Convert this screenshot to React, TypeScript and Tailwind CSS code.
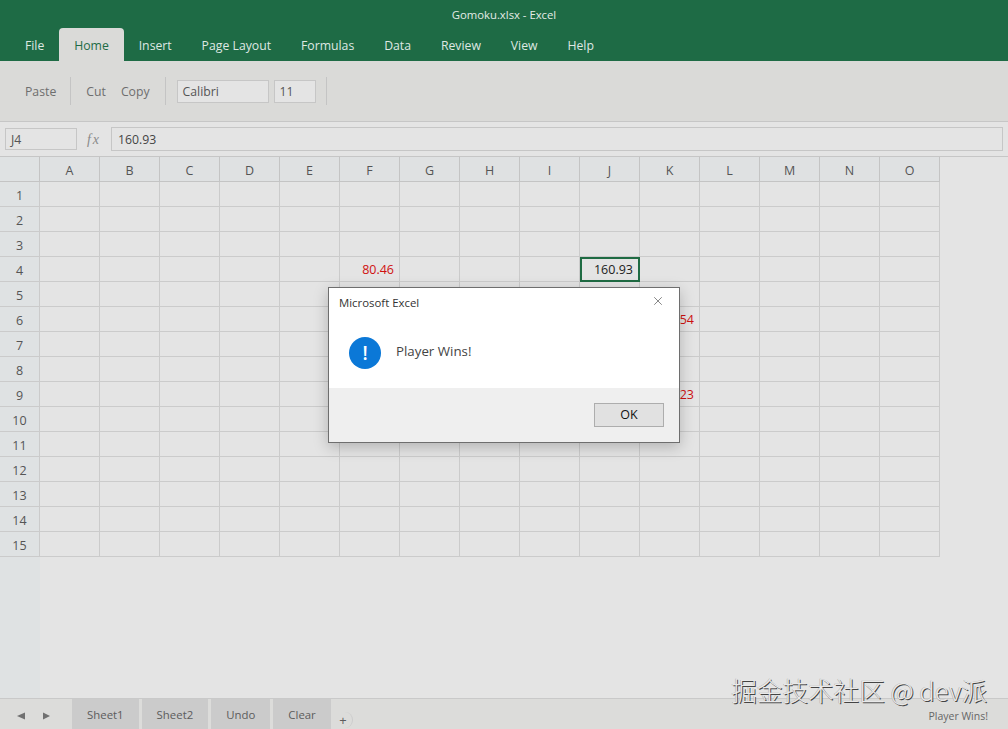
import { X } from "lucide-react";

const tabs = ["File", "Home", "Insert", "Page Layout", "Formulas", "Data", "Review", "View", "Help"];
const columns = ["A", "B", "C", "D", "E", "F", "G", "H", "I", "J", "K", "L", "M", "N", "O"];
const rows = Array.from({ length: 15 }, (_, i) => i + 1);
const sheets = ["Sheet1", "Sheet2", "Undo", "Clear"];

// cell values keyed by address, only these are filled on the board
const cells: Record<string, string> = {
  F4: "80.46",
  J4: "160.93",
  K6: "120.54",
  K9: "40.23",
};

function Cell({ address }: { address: string }) {
  const value = cells[address];
  const selected = address === "J4";
  return (
    <div
      className={`flex h-[25px] items-center justify-end pt-[2px] text-[12.5px] ${
        selected
          ? "border-2 border-[#1f6b43] pr-[5px] text-[#222222]"
          : "border-r border-b border-[#cbcbcb] pr-[5px] text-[#d01010]"
      }`}
    >
      {value}
    </div>
  );
}

export default function App() {
  return (
    <div className="relative flex h-[729px] w-[1008px] flex-col overflow-hidden bg-[#e4e4e4] font-['Open_Sans','Noto_Sans',sans-serif] text-[#444444]">
      {/* Title + ribbon tabs */}
      <div className="bg-[#1e6b45] text-[#dfe8e3]">
        <div className="flex h-[28px] items-center justify-center pt-[2px] text-[11.3px] text-[#e4ebe7]">Gomoku.xlsx - Excel</div>
        <div className="flex h-[33px] items-end pl-[10px] text-[12.25px]">
          {tabs.map((tab) => (
            <div
              key={tab}
              className={`flex h-[33px] items-center px-[14.95px] pt-[3px] ${
                tab === "Home" ? "rounded-t-[4px] bg-[#dadad8] text-[#1e6b45]" : ""
              }`}
            >
              {tab}
            </div>
          ))}
        </div>
      </div>

      {/* Ribbon */}
      <div className="flex h-[61px] items-center border-b border-[#c6c6c6] bg-[#dadad8] pl-[25px] text-[12.25px] text-[#6e6e6e]">
        <span className="pt-[3px]">Paste</span>
        <div className="mr-[15px] ml-[14px] h-[28px] w-px bg-[#c4c4c4]" />
        <span className="pt-[3px]">Cut</span>
        <span className="ml-[15px] pt-[3px]">Copy</span>
        <div className="mr-[11px] ml-[15px] h-[28px] w-px bg-[#c4c4c4]" />
        <div className="flex h-[23px] w-[92px] items-center border border-[#c6c6c6] bg-[#e4e4e4] pt-[3px] pl-[5px] text-[#555555]">Calibri</div>
        <div className="ml-[5px] flex h-[23px] w-[42px] items-center border border-[#c6c6c6] bg-[#e4e4e4] pt-[3px] pl-[5px] text-[#555555]">11</div>
        <div className="ml-[10px] h-[28px] w-px bg-[#c4c4c4]" />
      </div>

      {/* Formula bar */}
      <div className="flex h-[35px] items-center border-b border-[#c6c6c6] bg-[#e4e4e4] pl-[5px] text-[12.25px]">
        <div className="flex h-[22px] w-[72px] items-center border border-[#c6c6c6] pt-[2px] pl-[5px] text-[#555555]">J4</div>
        <span className="w-[34px] text-center font-['Liberation_Serif',serif] text-[14px] tracking-[2px] text-[#8a8a8a] italic">fx</span>
        <div className="flex h-[24px] w-[892px] items-center border border-[#c6c6c6] pt-[2px] pl-[6px] text-[#444444]">160.93</div>
      </div>

      {/* Sheet grid */}
      <div className="flex min-h-0 flex-1">
        <div className="w-[40px] bg-[#dfe2e3]">
          <div className="h-[25px] border-r border-b border-[#c4c4c4]" />
          {rows.map((row) => (
            <div key={row} className="flex h-[25px] items-center justify-center border-r border-b border-[#cbcbcb] pt-[4px] text-[12.5px] text-[#555555]">
              {row}
            </div>
          ))}
        </div>
        <div className="grid h-fit grid-cols-[repeat(15,60px)]">
          {columns.map((col) => (
            <div key={col} className="flex h-[25px] items-center justify-center border-r border-b border-[#c4c4c4] bg-[#dfe1e2] pt-[4px] text-[12.5px] text-[#555555]">
              {col}
            </div>
          ))}
          {rows.flatMap((row) => columns.map((col) => <Cell key={col + row} address={col + row} />))}
        </div>
      </div>

      {/* Sheet tabs + status */}
      <div className="flex h-[31px] items-end border-t border-[#c9c9c9] bg-[#dcdcda] text-[11.4px] text-[#5c5c5c]">
        <div className="flex h-[30px] w-[72px] items-center pl-[17px] text-[#707070]">
          <svg width="8" height="8" viewBox="0 0 8 8" className="mt-[3px]">
            <path d="M0 4 8 .5v7z" fill="currentColor" />
          </svg>
          <svg width="8" height="8" viewBox="0 0 8 8" className="mt-[3px] ml-[18px]">
            <path d="M7 4 0 .5v7z" fill="currentColor" />
          </svg>
        </div>
        <div className="flex gap-[3px]">
          {sheets.map((sheet) => (
            <div key={sheet} className="flex h-[30px] items-center bg-[#cbcbcb] px-[15px] pt-[2px]">
              {sheet}
            </div>
          ))}
        </div>
        <div className="mb-[1px] flex h-[16px] w-[22px] items-center justify-end rounded-r-full border-r border-[#cccccc] pr-[5px] text-[13px] leading-none">+</div>
        <div className="mb-[4px] ml-auto pr-[20px] text-[10.5px] text-[#666666]">Player Wins!</div>
      </div>

      {/* Message box */}
      <div className="absolute top-[287px] left-[328px] w-[352px] border border-[#6e6e6e] bg-white shadow-[0_4px_14px_rgba(0,0,0,0.22)]">
        <div className="flex h-[30px] items-center justify-between pr-[14px] pl-[10px] text-[11.4px] text-[#333333]">
          <span>Microsoft Excel</span>
          <X size={14} strokeWidth={1.2} className="-mt-[5px] text-[#555555]" />
        </div>
        <div className="flex h-[70px] items-center gap-[15px] pl-[20px] text-[13.3px] text-[#444444]">
          <div className="flex h-[32px] w-[32px] items-center justify-center rounded-full bg-[#0b78d7] text-[19px] leading-none font-semibold text-white">!</div>
          <span className="-mt-[3px]">Player Wins!</span>
        </div>
        <div className="flex h-[54px] items-center justify-end bg-[#efefef] pr-[15px]">
          <div className="flex h-[24px] w-[70px] items-center justify-center border border-[#adadad] bg-[#e1e1e1] text-[12.5px] text-[#111111]">OK</div>
        </div>
      </div>

      {/* Watermark */}
      <div className="absolute top-[677px] right-[21px] font-['Noto_Sans_CJK_SC','Open_Sans',sans-serif] text-[25.6px] leading-[26px] font-light text-[#e9e9e9] [text-shadow:1px_1px_0_#444444,-0.5px_-0.5px_0_#aaaaaa]">
        掘金技术社区 @ dev派
      </div>
    </div>
  );
}
